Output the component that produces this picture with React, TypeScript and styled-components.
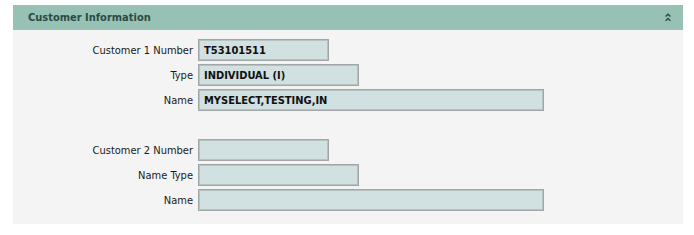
import React from "react";
import styled, { createGlobalStyle } from "styled-components";

const GlobalStyle = createGlobalStyle`
  html, body {
    margin: 0;
    padding: 0;
    background: #ffffff;
  }
  body {
    font-family: "DejaVu Sans Condensed", "DejaVu Sans", sans-serif;
    font-size: 11px;
    color: #1a1a1a;
  }
`;

const Page = styled.div`
  padding: 5px 11px 0 13px;
`;

const Panel = styled.section`
  background: #f4f4f4;
`;

const Header = styled.div`
  height: 25px;
  background: #97c1b5;
  display: flex;
  align-items: center;
  justify-content: space-between;
  padding: 0 12px 0 15px;
`;

const Title = styled.h2`
  margin: 0;
  font-size: 11px;
  font-weight: bold;
  color: #2b4a44;
`;

const Collapse = styled.button`
  border: 0;
  background: none;
  padding: 0;
  width: 6px;
  height: 10px;
  display: flex;
  align-items: center;
  justify-content: center;
  cursor: pointer;
`;

const Body = styled.div`
  padding: 9px 0 13px;
  display: flex;
  flex-direction: column;
  gap: 28px;
`;

const Group = styled.div`
  display: flex;
  flex-direction: column;
  gap: 3px;
`;

const Row = styled.div`
  display: flex;
  align-items: center;
  gap: 5px;
`;

const Label = styled.label`
  width: 180px;
  text-align: right;
  color: #1a1a1a;
`;

const Field = styled.div<{ $w: number }>`
  width: ${({ $w }) => $w}px;
  height: 22px;
  box-sizing: border-box;
  border: 1px solid #a2a6a6;
  box-shadow: inset 0 0 0 1px #b4c2c2;
  background: #d1e0e0;
  padding: 0 5px;
  display: flex;
  align-items: center;
  font-weight: bold;
  color: #0f0f0f;
`;

const ChevronUp = () => (
  <svg width="6" height="9" viewBox="0 0 6 9">
    <g fill="none" stroke="#2d4a43" strokeWidth="1.4">
      <path d="M0.6 3.6 L3 1.2 L5.4 3.6" />
      <path d="M0.6 7.8 L3 5.4 L5.4 7.8" />
    </g>
  </svg>
);

type Item = { label: string; value: string; width: number };

const groups: Item[][] = [
  [
    { label: "Customer 1 Number", value: "T53101511", width: 131 },
    { label: "Type", value: "INDIVIDUAL (I)", width: 161 },
    { label: "Name", value: "MYSELECT,TESTING,IN", width: 346 },
  ],
  [
    { label: "Customer 2 Number", value: "", width: 131 },
    { label: "Name Type", value: "", width: 161 },
    { label: "Name", value: "", width: 346 },
  ],
];

export default function App() {
  return (
    <Page>
      <GlobalStyle />
      <Panel>
        <Header>
          <Title>Customer Information</Title>
          <Collapse aria-label="Collapse">
            <ChevronUp />
          </Collapse>
        </Header>
        <Body>
          {groups.map((g, i) => (
            <Group key={i}>
              {g.map((item) => (
                <Row key={item.label}>
                  <Label>{item.label}</Label>
                  <Field $w={item.width}>{item.value}</Field>
                </Row>
              ))}
            </Group>
          ))}
        </Body>
      </Panel>
    </Page>
  );
}
